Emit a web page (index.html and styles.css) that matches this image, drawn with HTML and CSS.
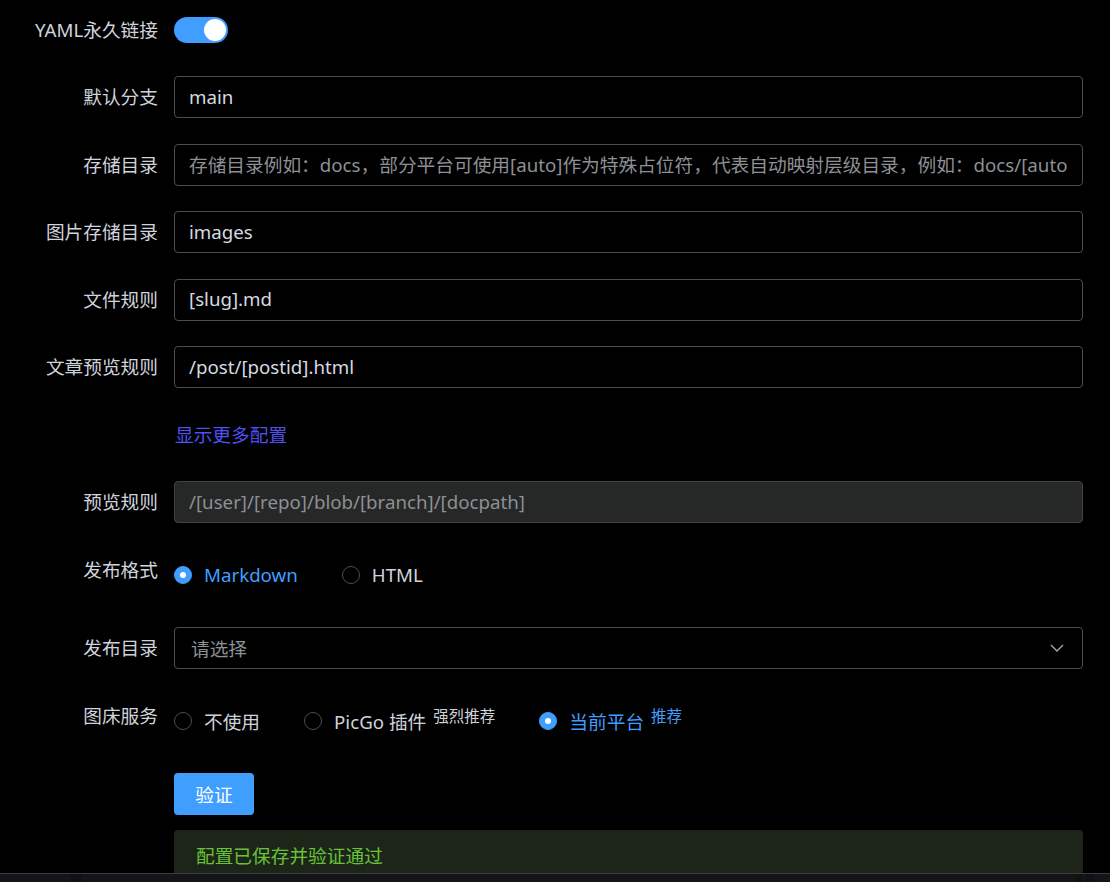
FILE: index.html
```html
<!DOCTYPE html>
<html lang="zh-CN">
<head>
<meta charset="utf-8">
<title>配置</title>
<link rel="stylesheet" href="styles.css">
</head>
<body>
<form class="form">
  <div class="item">
    <label class="label">YAML永久链接</label>
    <div class="content">
      <span class="switch"><span class="knob"></span></span>
    </div>
  </div>
  <div class="item">
    <label class="label">默认分支</label>
    <div class="content"><div class="input"><span class="val">main</span></div></div>
  </div>
  <div class="item">
    <label class="label">存储目录</label>
    <div class="content"><div class="input"><span class="ph">存储目录例如：docs，部分平台可使用[auto]作为特殊占位符，代表自动映射层级目录，例如：docs/[auto]/[slug]</span></div></div>
  </div>
  <div class="item">
    <label class="label">图片存储目录</label>
    <div class="content"><div class="input"><span class="val">images</span></div></div>
  </div>
  <div class="item">
    <label class="label">文件规则</label>
    <div class="content"><div class="input"><span class="val">[slug].md</span></div></div>
  </div>
  <div class="item">
    <label class="label">文章预览规则</label>
    <div class="content"><div class="input"><span class="val">/post/[postid].html</span></div></div>
  </div>
  <div class="item">
    <label class="label"></label>
    <div class="content"><a class="more">显示更多配置</a></div>
  </div>
  <div class="item">
    <label class="label">预览规则</label>
    <div class="content"><div class="input disabled"><span class="val">/[user]/[repo]/blob/[branch]/[docpath]</span></div></div>
  </div>
  <div class="item">
    <label class="label">发布格式</label>
    <div class="content radios">
      <span class="radio checked"><span class="dot"></span><span class="rtext">Markdown</span></span>
      <span class="radio"><span class="dot"></span><span class="rtext">HTML</span></span>
    </div>
  </div>
  <div class="item">
    <label class="label">发布目录</label>
    <div class="content">
      <div class="input select">
        <span class="ph">请选择</span>
        <svg class="arrow" width="14" height="8" viewBox="0 0 14 8"><path d="M1 1 L7 7 L13 1" fill="none" stroke="#a8abb2" stroke-width="1.3"/></svg>
      </div>
    </div>
  </div>
  <div class="item">
    <label class="label">图床服务</label>
    <div class="content radios">
      <span class="radio"><span class="dot"></span><span class="rtext">不使用</span></span>
      <span class="radio"><span class="dot"></span><span class="rtext">PicGo 插件<sup class="tag">强烈推荐</sup></span></span>
      <span class="radio checked"><span class="dot"></span><span class="rtext">当前平台<sup class="tag">推荐</sup></span></span>
    </div>
  </div>
  <div class="item btn-item">
    <label class="label"></label>
    <div class="content"><button type="button" class="btn">验证</button></div>
  </div>
  <div class="item">
    <label class="label"></label>
    <div class="content"><div class="alert">配置已保存并验证通过</div></div>
  </div>
</form>
<div class="footer">
  <span class="seg s1"></span>
  <span class="seg s2"></span>
  <span class="seg s3"></span>
</div>
</body>
</html>
```

FILE: styles.css
```css
html, body {
  margin: 0;
  padding: 0;
  background: #000;
  height: 100%;
  overflow: hidden;
}
body {
  font-family: "Noto Sans", "Noto Sans CJK SC", sans-serif;
  font-size: 18.7px;
  color: #cfd3dc;
}
.form {
  padding-top: 8.5px;
}
.item {
  display: flex;
  margin-bottom: 25.5px;
}
.btn-item {
  margin-bottom: 15px;
}
.label {
  width: 174px;
  box-sizing: border-box;
  padding-right: 16px;
  text-align: right;
  line-height: 41px;
  height: 42px;
  flex-shrink: 0;
  color: #cfd3dc;
  white-space: nowrap;
}
.content {
  flex: 1;
  margin-right: 27px;
  min-height: 42px;
  display: flex;
  align-items: center;
  min-width: 0;
}
.switch {
  position: relative;
  width: 54px;
  height: 26px;
  border-radius: 13px;
  background: #409eff;
  display: inline-block;
}
.knob {
  position: absolute;
  right: 2px;
  top: 2px;
  width: 22px;
  height: 22px;
  border-radius: 50%;
  background: #fff;
}
.input {
  flex: 1;
  height: 42px;
  box-sizing: border-box;
  border: 1px solid #4c4d4f;
  border-radius: 4px;
  padding: 0 15px 2px 14px;
  display: flex;
  align-items: center;
  overflow: hidden;
  white-space: nowrap;
  min-width: 0;
}
.val {
  color: #d6dae2;
}
.ph {
  color: #8d9095;
  overflow: hidden;
  white-space: nowrap;
  flex: 1;
  min-width: 0;
}
.select .ph {
  padding-left: 2px;
}
.arrow {
  margin-right: 3px;
  margin-top: 2px;
  flex-shrink: 0;
}
.disabled {
  background: #262727;
  border-color: #414243;
}
.disabled .val {
  color: #8d9095;
}
.more {
  color: #4f4ff2;
  cursor: pointer;
  padding-left: 1px;
  margin-top: -2px;
}
.radios {
  height: 53px;
}
.radio {
  display: inline-flex;
  align-items: center;
  margin-right: 44px;
  color: #cfd3dc;
}
.rtext {
  margin-top: -2px;
}
.dot {
  width: 18px;
  height: 18px;
  box-sizing: border-box;
  border: 1px solid #4c4d4f;
  border-radius: 50%;
  background: #000;
  margin-right: 12px;
  position: relative;
  flex-shrink: 0;
}
.checked .dot {
  background: #409eff;
  border-color: #409eff;
}
.checked .dot::after {
  content: "";
  position: absolute;
  left: 50%;
  top: 50%;
  width: 6px;
  height: 6px;
  margin: -3px 0 0 -3px;
  border-radius: 50%;
  background: #fff;
}
.checked .rtext {
  color: #409eff;
}
.tag {
  font-size: 15.5px;
  margin-left: 7px;
  vertical-align: 7px;
  line-height: 1;
}
.btn {
  width: 80px;
  height: 42px;
  border: none;
  border-radius: 4px;
  background: #409eff;
  color: #fff;
  font-family: "Noto Sans", "Noto Sans CJK SC", sans-serif;
  font-size: 18.7px;
  padding: 0 0 2px;
}
.alert {
  flex: 1;
  background: #1c2518;
  color: #67c23a;
  border-radius: 4px;
  padding: 13px 21px 40px 22px;
  line-height: 26px;
}
.footer {
  position: fixed;
  left: 0;
  right: 0;
  bottom: 0;
  height: 8px;
  background: #141519;
  border-top: 1px solid #3b3c40;
}
.seg {
  position: absolute;
  top: 0;
  bottom: 0;
  background: #101114;
}
.s1 { left: 70px; width: 12px; }
.s2 { left: 1076px; width: 6px; }
.s3 { left: 1086px; width: 7px; }
```
